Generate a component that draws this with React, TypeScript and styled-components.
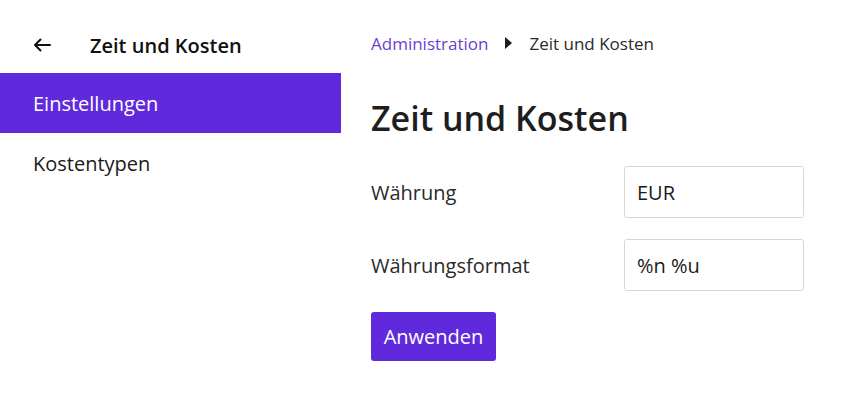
import React from "react";
import styled, { createGlobalStyle } from "styled-components";

const Global = createGlobalStyle`
  html, body { margin: 0; padding: 0; background: #fff; }
  body { font-family: "Open Sans", "Noto Sans", sans-serif; color: #212529; }
  * { box-sizing: border-box; }
`;

const Page = styled.div`
  display: flex;
  width: 847px;
  height: 410px;
`;

const Sidebar = styled.nav`
  width: 341px;
  flex-shrink: 0;
  padding-top: 17px;
  display: flex;
  flex-direction: column;
`;

const SideHeader = styled.div`
  display: flex;
  align-items: center;
  height: 56px;
  padding-left: 33px;
  gap: 39px;
`;

const SideTitle = styled.div`
  font-size: 20px;
  font-weight: 600;
  color: #111;
`;

const NavItem = styled.div<{ $active?: boolean }>`
  height: 60px;
  display: flex;
  align-items: center;
  padding-left: 33px;
  font-size: 20px;
  background: ${(p) => (p.$active ? "#6029DC" : "transparent")};
  color: ${(p) => (p.$active ? "#fff" : "#1a1a1a")};
`;

const Main = styled.main`
  flex: 1;
  padding: 30px 0 0 30px;
  display: flex;
  flex-direction: column;
`;

const Breadcrumb = styled.div`
  display: flex;
  align-items: center;
  font-size: 17px;
  height: 26px;
  gap: 17px;
`;

const Crumb = styled.span<{ $link?: boolean }>`
  color: ${(p) => (p.$link ? "#6A3FD0" : "#2b2b2b")};
`;

const Heading = styled.h1`
  margin: 42px 0 0;
  font-size: 34px;
  font-weight: 600;
  line-height: 40px;
  color: #1e1e1e;
`;

const Form = styled.form`
  margin-top: 28px;
  width: 433px;
  display: flex;
  flex-direction: column;
  gap: 21px;
`;

const Row = styled.div`
  display: flex;
  align-items: center;
  justify-content: space-between;
`;

const Label = styled.label`
  font-size: 20px;
  color: #2a2a2a;
`;

const Input = styled.input`
  width: 180px;
  height: 52px;
  border: 1px solid #d6d6d6;
  border-radius: 3px;
  padding: 0 12px;
  font-family: inherit;
  font-size: 20px;
  color: #1a1a1a;
  outline: none;
`;

const Button = styled.button`
  align-self: flex-start;
  width: 125px;
  height: 49px;
  border: none;
  border-radius: 3px;
  background: #6029DC;
  color: #fff;
  font-family: inherit;
  font-size: 20px;
  cursor: pointer;
`;

const BackArrow = () => (
  <svg width="18" height="14" viewBox="0 0 18 14" fill="none">
    <path d="M17 7H2M7.5 1.5L2 7l5.5 5.5" stroke="#111" strokeWidth="2" strokeLinecap="round" strokeLinejoin="round" />
  </svg>
);

const Caret = () => (
  <svg width="7" height="12" viewBox="0 0 7 12">
    <path d="M0 0L7 6L0 12Z" fill="#1e1e1e" />
  </svg>
);

export default function App() {
  return (
    <>
      <Global />
      <Page>
        <Sidebar>
          <SideHeader>
            <BackArrow />
            <SideTitle>Zeit und Kosten</SideTitle>
          </SideHeader>
          <NavItem $active>Einstellungen</NavItem>
          <NavItem>Kostentypen</NavItem>
        </Sidebar>
        <Main>
          <Breadcrumb>
            <Crumb $link>Administration</Crumb>
            <Caret />
            <Crumb>Zeit und Kosten</Crumb>
          </Breadcrumb>
          <Heading>Zeit und Kosten</Heading>
          <Form onSubmit={(e) => e.preventDefault()}>
            <Row>
              <Label>Währung</Label>
              <Input defaultValue="EUR" />
            </Row>
            <Row>
              <Label>Währungsformat</Label>
              <Input defaultValue="%n %u" />
            </Row>
            <Button type="submit">Anwenden</Button>
          </Form>
        </Main>
      </Page>
    </>
  );
}
